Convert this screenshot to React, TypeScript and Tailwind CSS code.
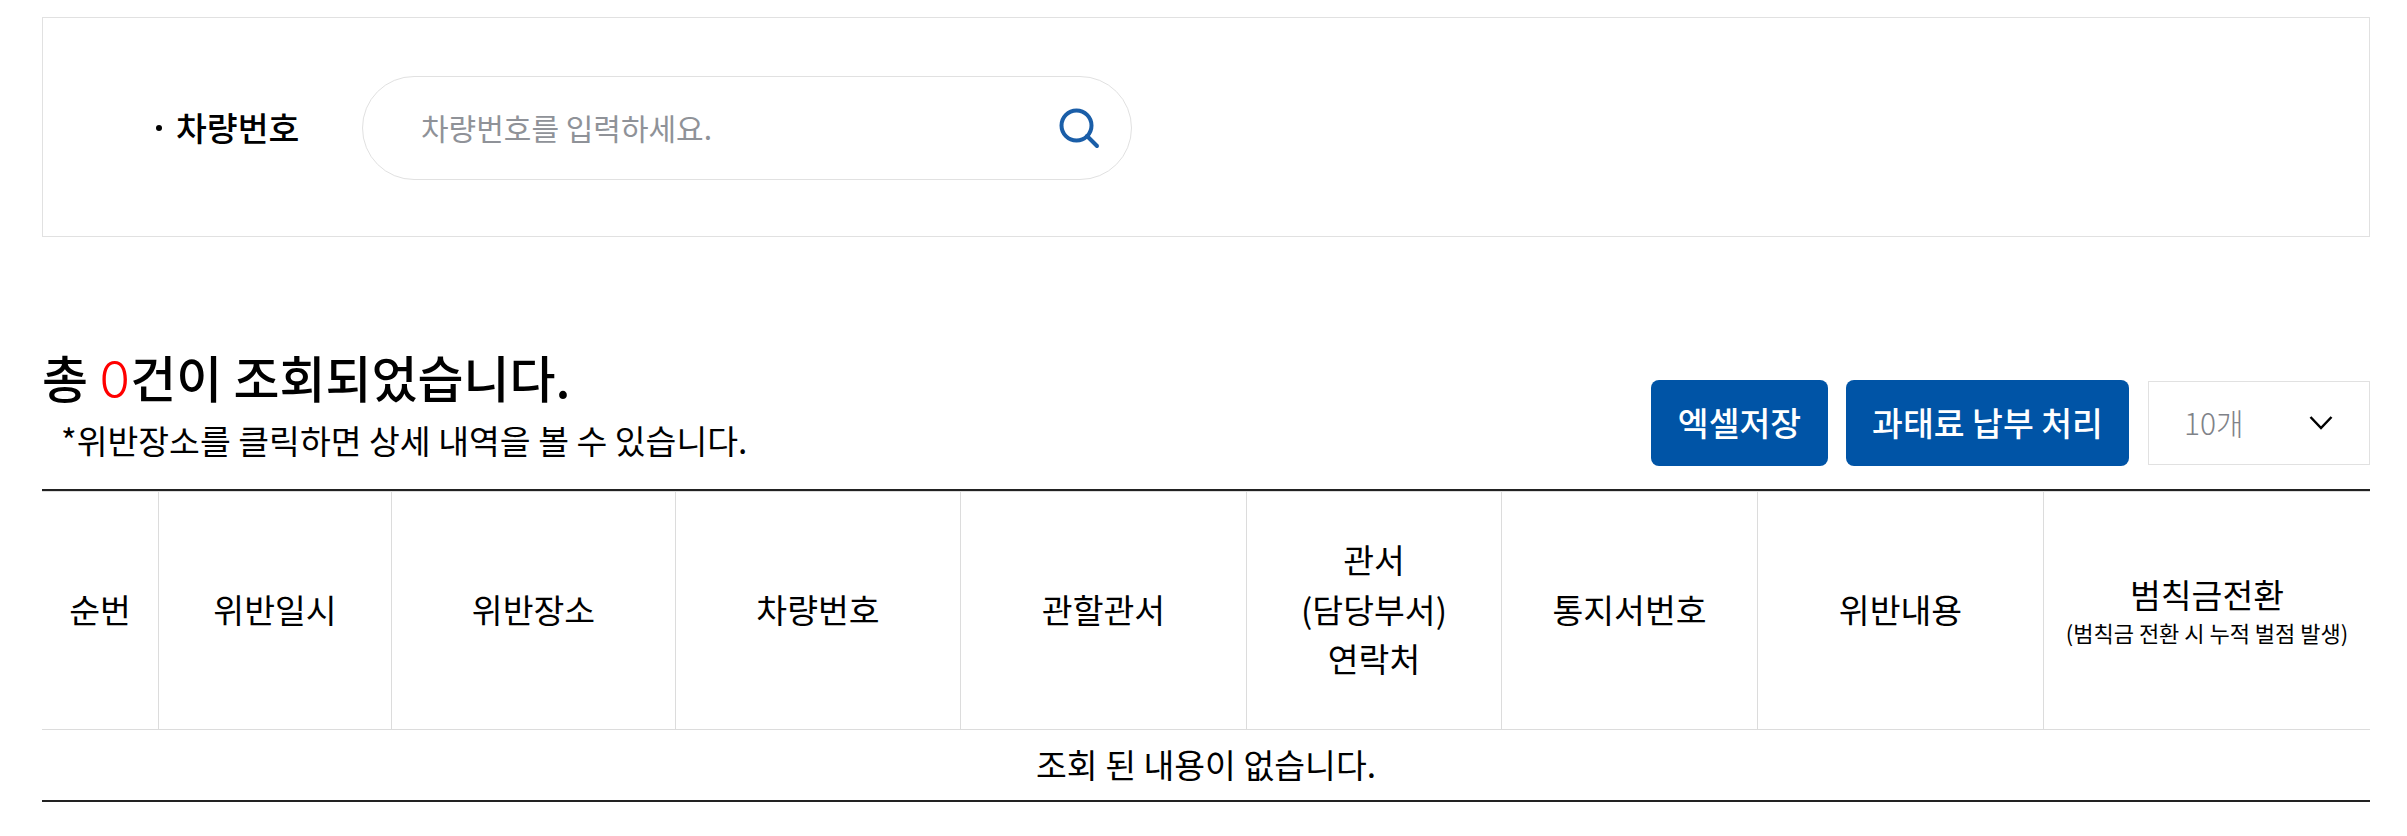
const cols = [117, 233, 284, 285, 286, 255, 256, 286, 326];

function Th({ children, last }: { children: React.ReactNode; last?: boolean }) {
  return (
    <th className={`border-t border-b-[1.5px] border-t-[#dcdcdc] border-b-[#dcdcdc] p-0 pb-[4px] text-center align-middle text-[33.5px] leading-[49.5px] font-normal text-black ${last ? "" : "border-r-[1.5px] border-r-[#dcdcdc]"}`}>
      {children}
    </th>
  );
}

export default function App() {
  return (
    <div className="min-h-[836px] bg-white pt-[17px] pr-[37px] pl-[42px] font-['Noto_Sans_CJK_KR','Noto_Sans',sans-serif] text-black">
      <section className="flex h-[220px] items-center border-[1.5px] border-[#e1e1e1] pt-[2px]">
        <div className="ml-[113px] flex w-[206px] items-center gap-[14px]">
          <span className="h-[6px] w-[6px] rounded-full bg-black" />
          <span className="mb-[3px] text-[33.5px] leading-[48px] font-medium">차량번호</span>
        </div>
        <div className="flex h-[104px] w-[770px] items-center justify-between rounded-[52px] border-[1.5px] border-[#e1e1e1] pr-[31px] pl-[58px]">
          <span className="mb-[3px] text-[30px] leading-[44px] text-[#8f9298]">차량번호를 입력하세요.</span>
          <svg width="42" height="42" viewBox="0 0 42 42" fill="none" stroke="#1a5ea8" strokeWidth="4">
            <circle cx="18.5" cy="18.5" r="15" />
            <path d="M29 29l10 10" strokeLinecap="round" />
          </svg>
        </div>
      </section>

      <section className="flex h-[252px] items-end justify-between pb-[23px]">
        <div className="mb-[2px]">
          <h2 className="text-[50px] leading-[60px] font-medium">
            총 <span className="font-['Inter',sans-serif] leading-[0] font-light text-[#ff0000]">0</span>건이 조회되었습니다.
          </h2>
          <p className="mt-[10px] pl-[19px] text-[33.5px] leading-[48px]">*위반장소를 클릭하면 상세 내역을 볼 수 있습니다.</p>
        </div>
        <div className="flex items-center gap-[18px]">
          <button className="flex h-[86px] w-[177px] items-center justify-center rounded-[8px] bg-[#0054a6] pb-[2px] text-[33.5px] font-medium text-white">엑셀저장</button>
          <button className="flex h-[86px] w-[283px] items-center justify-center rounded-[8px] bg-[#0054a6] pb-[2px] text-[33.5px] font-medium text-white">과태료 납부 처리</button>
          <div className="ml-px flex h-[84px] w-[222px] items-center justify-between border-[1.5px] border-[#e1e1e1] pr-[36px] pl-[35px]">
            <span className="mb-[2px] text-[30px] leading-[44px] font-light text-[#7f8288]">10개</span>
            <svg width="24" height="16" viewBox="0 0 24 16" fill="none" stroke="#000" strokeWidth="2.5">
              <path d="M1.5 2l10.5 11L22.5 2" />
            </svg>
          </div>
        </div>
      </section>

      <table className="w-full table-fixed border-separate border-spacing-0 border-t-[2px] border-b-[2px] border-t-[#222] border-b-[#222]">
        <colgroup>
          {cols.map((w, i) => (
            <col key={i} style={{ width: w }} />
          ))}
        </colgroup>
        <thead>
          <tr className="h-[239px]">
            <Th>순번</Th>
            <Th>위반일시</Th>
            <Th>위반장소</Th>
            <Th>차량번호</Th>
            <Th>관할관서</Th>
            <Th>
              관서
              <br />
              (담당부서)
              <br />
              연락처
            </Th>
            <Th>통지서번호</Th>
            <Th>위반내용</Th>
            <Th last>
              <span className="block leading-[46px]">범칙금전환</span>
              <span className="block text-[22px] leading-[30px]">(범칙금 전환 시 누적 벌점 발생)</span>
            </Th>
          </tr>
        </thead>
        <tbody>
          <tr className="h-[70px]">
            <td colSpan={9} className="p-0 pb-[3px] text-center align-middle text-[33.5px] leading-[48px]">조회 된 내용이 없습니다.</td>
          </tr>
        </tbody>
      </table>
    </div>
  );
}
